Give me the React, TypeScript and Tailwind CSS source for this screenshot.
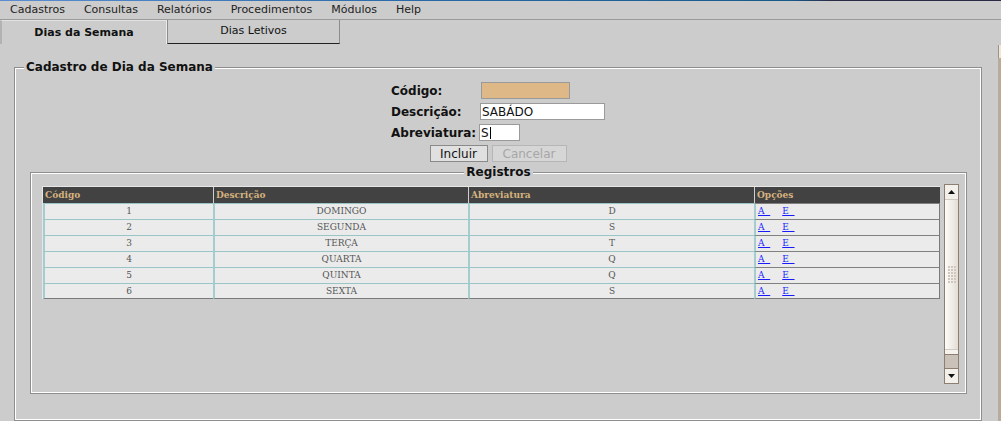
import React from 'react'

const menu = ['Cadastros', 'Consultas', 'Relatórios', 'Procedimentos', 'Módulos', 'Help']

const rows = [
  ['1', 'DOMINGO', 'D'],
  ['2', 'SEGUNDA', 'S'],
  ['3', 'TERÇA', 'T'],
  ['4', 'QUARTA', 'Q'],
  ['5', 'QUINTA', 'Q'],
  ['6', 'SEXTA', 'S'],
]

function Group({
  title,
  center,
  className = '',
  bodyClass = '',
  children,
}: {
  title: string
  center?: boolean
  className?: string
  bodyClass?: string
  children: React.ReactNode
}) {
  return (
    <div className={'flex flex-col ' + className}>
      <div className={'relative z-10 flex h-[15px] -mb-[8px] ' + (center ? 'justify-center' : 'pl-[10px]')}>
        <span className="bg-[#cccccc] px-[2px] text-[12px] leading-[15px] font-bold text-[#111]">{title}</span>
      </div>
      <div className={'border border-[#8e8e8e] shadow-[inset_0_0_0_1px_#fff] ' + bodyClass}>{children}</div>
    </div>
  )
}

function Scrollbar() {
  return (
    <div className="ml-[4px] w-[15px] h-[200px] border border-[#8c7e72] flex flex-col bg-[#f3f0eb]">
      <div className="h-[15px] border-b border-[#d2cbc3] flex items-center justify-center">
        <svg width="7" height="4" viewBox="0 0 7 4">
          <polygon points="3.5,0 7,4 0,4" fill="#111" />
        </svg>
      </div>
      <div className="flex-1 bg-[linear-gradient(to_right,#fdfcfb,#e4ddd4)] border-b border-[#d2cbc3] flex items-center justify-center">
        <svg width="8" height="17" viewBox="0 0 8 17">
          {[0, 1, 2, 3, 4, 5].map((r) =>
            [0, 1, 2].map((c) => (
              <rect key={r + '-' + c} x={c * 3} y={r * 3} width="2" height="2" fill="#d0c8bf" />
            ))
          )}
        </svg>
      </div>
      <div className="h-[5px] bg-[#f6f3ef] border-b border-[#8c7e72]" />
      <div className="h-[14px] bg-[#cac2b8] border-b border-[#8c7e72]" />
      <div className="h-[14px] flex items-center justify-center bg-[#f3f0eb]">
        <svg width="7" height="4" viewBox="0 0 7 4">
          <polygon points="0,0 7,0 3.5,4" fill="#111" />
        </svg>
      </div>
    </div>
  )
}

export default function App() {
  return (
    <div className="w-[1001px] h-[421px] overflow-hidden bg-[#cccccc] font-['DejaVu_Sans',sans-serif] text-[#111]">
      <div className="h-px bg-[linear-gradient(to_right,#5a8ed0,#2a6aa8_40%,#175a8a_79%,#2b2b46_83%)]" />

      {/* menu */}
      <div className="h-[19px] border-b border-[#9a9a9a] flex items-center pl-[10px] gap-[19px] text-[11px] text-[#222]">
        {menu.map((m) => (
          <span key={m}>{m}</span>
        ))}
      </div>

      {/* tabs */}
      <div className="flex h-[24px]">
        <div className="w-[167px] border-t border-t-[#e2e2e2] border-l-2 border-l-[#b2b2b2] border-r border-r-[#ececec] flex items-center justify-center pt-[2px] text-[11px] font-bold">
          Dias da Semana
        </div>
        <div className="w-[173px] border-x border-[#8c8c8c] border-b border-b-[#222] flex items-center justify-center text-[11px] text-[#111]">
          Dias Letivos
        </div>
      </div>

      <div className="flex">
        <Group title="Cadastro de Dia da Semana" className="ml-[14px] mt-[16px] w-[968px]" bodyClass="pt-[12px] pb-[26px]">
          <div className="mx-auto w-fit grid grid-cols-[88px_126px] auto-rows-[21px] items-center text-[12px]">
            <span className="font-bold">Código:</span>
            <div className="ml-[2px] w-[89px] h-[17px] bg-[#deb887] border border-[#9a9a9a]" />
            <span className="font-bold">Descrição:</span>
            <div className="ml-[1px] w-[125px] h-[17px] bg-white border border-[#9a9a9a] flex items-center pl-[1px] leading-none">
              SABÁDO
            </div>
            <span className="font-bold">Abreviatura:</span>
            <div className="w-[41px] h-[17px] bg-white border border-[#9a9a9a] flex items-center pl-[1px] leading-none">
              S<span className="ml-[1px] w-px h-[12px] bg-black" />
            </div>
          </div>
          <div className="h-[21px] flex items-center justify-center gap-[4px] text-[12px]">
            <div className="w-[58px] h-[17px] bg-[#e0e0e0] border border-[#8a8a8a] flex items-center justify-center leading-none">
              Incluir
            </div>
            <div className="w-[75px] h-[17px] bg-[#d6d6d6] border border-[#b6b6b6] flex items-center justify-center leading-none text-[#a6a6a6]">
              Cancelar
            </div>
          </div>

          <Group title="Registros" center className="mt-[1px] ml-[15px] w-[937px]" bodyClass="pt-[11px] pb-[9px] pl-[11px]">
            <div className="flex h-[200px]">
              <div className="w-[898px] pt-[2px]">
                <div className="border-t border-l border-[#e6e6e6] font-['DejaVu_Serif',serif] text-[9px]">
                  <div className="grid grid-cols-[170px_255px_286px_186px] h-[16px] bg-[#424242] text-[#d6b27e] font-bold">
                    <div className="flex items-center pl-[2px] pt-[1px]">Código</div>
                    <div className="flex items-center pl-[2px] pt-[1px] border-l border-[#cfcfcf]">Descrição</div>
                    <div className="flex items-center pl-[2px] pt-[1px] border-l border-[#cfcfcf]">Abreviatura</div>
                    <div className="flex items-center pl-[2px] pt-[1px] border-l border-[#cfcfcf]">Opções</div>
                  </div>
                  {rows.map((r, i) => {
                    const last = i === rows.length - 1
                    const cell =
                      'h-[16px] flex items-center justify-center pt-[1px] bg-[#ebebeb] border-t border-t-[#98c6c6] border-l-2 border-l-[#a4cdcd] ' +
                      (last ? 'border-b border-b-[#7a7a7a] ' : '')
                    return (
                      <div key={r[0]} className="grid grid-cols-[170px_255px_286px_186px] text-[#555]">
                        <div className={cell}>{r[0]}</div>
                        <div className={cell}>{r[1]}</div>
                        <div className={cell}>{r[2]}</div>
                        <div
                          className={
                            'h-[16px] flex items-center pl-[2px] pt-[1px] bg-[#ebebeb] border-t border-t-[#808080] border-l-2 border-l-[#a4cdcd] border-r border-r-[#7a7a7a] ' +
                            (last ? 'border-b border-b-[#7a7a7a]' : '')
                          }
                        >
                          <a className="text-[#1a1aff] underline">A&nbsp;&nbsp;</a>
                          <a className="ml-[12px] text-[#1a1aff] underline">E&nbsp;&nbsp;</a>
                        </div>
                      </div>
                    )
                  })}
                </div>
              </div>
              <Scrollbar />
            </div>
          </Group>
        </Group>

        <div className="ml-auto w-[3px] mt-[1px] flex flex-col">
          <div className="h-[13px] bg-[#ece7df] border-l border-[#a09080]" />
          <div className="flex-1 bg-[#b9ab9c]" />
        </div>
      </div>
    </div>
  )
}
